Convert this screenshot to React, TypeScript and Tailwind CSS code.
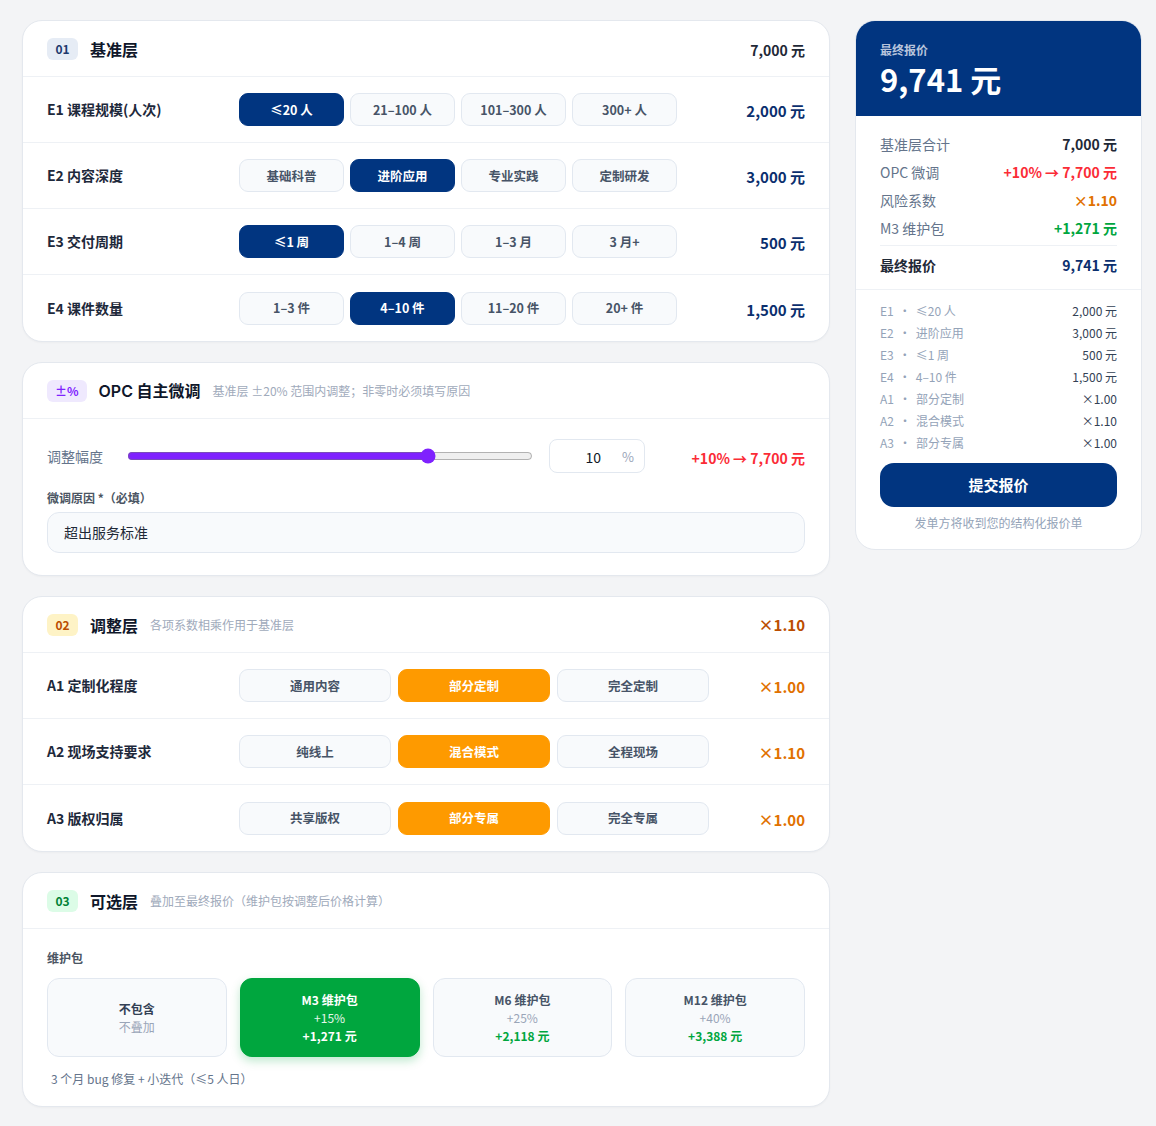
import React, { useState } from "react";

const font = "font-['Noto_Sans_CJK_SC','Noto_Sans',sans-serif]";

interface CardHeaderProps {
  badge: string;
  badgeClass: string;
  title: React.ReactNode;
  sub?: string;
  right?: React.ReactNode;
  titleClass?: string;
}

const CardHeader = ({ badge, badgeClass, title, sub, right, titleClass }: CardHeaderProps) => (
  <div className="flex h-[56px] items-center border-b border-[#eef1f5] px-6">
    <span className={`flex h-[22px] min-w-[31px] items-center justify-center rounded-md px-2 text-[12px] font-bold ${badgeClass}`}>
      {badge}
    </span>
    <span className={`ml-3 font-bold text-[#0f172a] ${titleClass ?? "text-[16px]"}`}>{title}</span>
    {sub && <span className="ml-3 text-[12px] text-[#a0aabb]">{sub}</span>}
    <div className="ml-auto">{right}</div>
  </div>
);

interface OptionRowProps {
  label: string;
  options: string[];
  selected: number;
  value: string;
  cols: "4" | "3";
  tone: "navy" | "amber";
  last?: boolean;
}

const OptionRow = ({ label, options, selected, value, cols, tone, last }: OptionRowProps) => {
  const activeCls =
    tone === "navy"
      ? "bg-[#013580] text-white border-[#013580] font-bold"
      : "bg-[#fe9a00] text-white border-[#fe9a00] font-bold";
  return (
    <div className={`flex h-[66px] items-center px-6 ${last ? "" : "border-b border-[#eef1f5]"}`}>
      <div className="w-[192px] text-[14px] font-bold text-[#1e293b]">{label}</div>
      <div className={cols === "4" ? "grid w-[438px] grid-cols-4 gap-1.5" : "grid w-[470px] grid-cols-3 gap-[7px]"}>
        {options.map((o, i) => (
          <div
            key={o}
            className={`flex h-[33px] items-center justify-center rounded-[9px] border pt-[1px] text-[12.5px] ${
              i === selected ? activeCls : "border-[#e2e8f0] bg-[#f8fafc] font-semibold text-[#475467]"
            }`}
          >
            {o}
          </div>
        ))}
      </div>
      <div
        className={`ml-auto pt-1 text-[15px] ${
          tone === "navy" ? "font-bold text-[#0b2f6e]" : "font-semibold text-[#e17100]"
        }`}
      >
        {value}
      </div>
    </div>
  );
};

const Card = ({ children }: { children: React.ReactNode }) => (
  <div className="overflow-hidden rounded-[20px] border border-[#e4e8ee] bg-white shadow-[0_1px_2px_rgba(15,23,42,0.03)]">
    {children}
  </div>
);

const maint = [
  { t: "不包含", p: "不叠加", a: "" },
  { t: "M3 维护包", p: "+15%", a: "+1,271 元" },
  { t: "M6 维护包", p: "+25%", a: "+2,118 元" },
  { t: "M12 维护包", p: "+40%", a: "+3,388 元" },
];

const breakdown = [
  ["E1", "≤20 人", "2,000 元"],
  ["E2", "进阶应用", "3,000 元"],
  ["E3", "≤1 周", "500 元"],
  ["E4", "4–10 件", "1,500 元"],
  ["A1", "部分定制", "×1.00"],
  ["A2", "混合模式", "×1.10"],
  ["A3", "部分专属", "×1.00"],
];

export default function App() {
  const [pct, setPct] = useState(10);
  return (
    <div className={`min-h-[1126px] bg-[#f3f4f6] pt-5 pl-[22px] ${font}`}>
      <div className="flex items-start gap-[25px]">
        <div className="flex w-[808px] flex-col gap-5">
          <Card>
            <CardHeader
              badge="01"
              badgeClass="bg-[#e6ecf5] text-[#1e3a6e]"
              title="基准层"
              right={<span className="text-[14px] font-semibold text-[#1f2937]">7,000 元</span>}
            />
            <OptionRow label="E1 课程规模(人次)" options={["≤20 人", "21–100 人", "101–300 人", "300+ 人"]} selected={0} value="2,000 元" cols="4" tone="navy" />
            <OptionRow label="E2 内容深度" options={["基础科普", "进阶应用", "专业实践", "定制研发"]} selected={1} value="3,000 元" cols="4" tone="navy" />
            <OptionRow label="E3 交付周期" options={["≤1 周", "1–4 周", "1–3 月", "3 月+"]} selected={0} value="500 元" cols="4" tone="navy" />
            <OptionRow label="E4 课件数量" options={["1–3 件", "4–10 件", "11–20 件", "20+ 件"]} selected={1} value="1,500 元" cols="4" tone="navy" last />
          </Card>

          <Card>
            <CardHeader
              badge="±%"
              badgeClass="bg-[#efe9fe] text-[#7f22fe]"
              title={
                <>
                  <span className="font-['Inter',sans-serif] font-semibold">OPC</span> 自主微调
                </>
              }
              titleClass="text-[16px]"
              sub="基准层 ±20% 范围内调整；非零时必须填写原因"
            />
            <div className="px-6 pt-5 pb-[22px]">
              <div className="flex items-center">
                <span className="w-[80px] text-[14px] text-[#64748b]">调整幅度</span>
                <input
                  type="range"
                  min={-20}
                  max={20}
                  value={pct}
                  onChange={(e) => setPct(Number(e.target.value))}
                  className="w-[406px] accent-[#7f22fe]"
                />
                <div className="relative ml-4 h-[34px] w-[96px] rounded-lg border border-[#e2e8f0] bg-white">
                  <span className="absolute top-[7px] right-[43px] text-[14px] text-[#111827]">{pct}</span>
                  <span className="absolute top-[7px] right-[10px] text-[13px] text-[#9aa5b8]">%</span>
                </div>
                <span className="ml-auto pt-1 text-[14px] font-semibold text-[#fb2c36]">+10% → 7,700 元</span>
              </div>
              <div className="mt-4 text-[12px] font-semibold text-[#4b5563]">微调原因 *（必填）</div>
              <div className="mt-[5px] flex h-[41px] items-center rounded-xl border border-[#e2e8f0] bg-[#f8fafc] px-4 text-[14px] text-[#1f2937]">
                超出服务标准
              </div>
            </div>
          </Card>

          <Card>
            <CardHeader
              badge="02"
              badgeClass="bg-[#fef3c6] text-[#bb4d00]"
              title="调整层"
              sub="各项系数相乘作用于基准层"
              right={<span className="text-[15px] font-semibold text-[#bb4d00]">×1.10</span>}
            />
            <OptionRow label="A1 定制化程度" options={["通用内容", "部分定制", "完全定制"]} selected={1} value="×1.00" cols="3" tone="amber" />
            <OptionRow label="A2 现场支持要求" options={["纯线上", "混合模式", "全程现场"]} selected={1} value="×1.10" cols="3" tone="amber" />
            <OptionRow label="A3 版权归属" options={["共享版权", "部分专属", "完全专属"]} selected={1} value="×1.00" cols="3" tone="amber" last />
          </Card>

          <Card>
            <CardHeader badge="03" badgeClass="bg-[#dcfce7] text-[#008236]" title="可选层" sub="叠加至最终报价（维护包按调整后价格计算）" />
            <div className="px-6 pt-[20px] pb-[18px]">
              <div className="text-[12px] font-semibold text-[#4b5563]">维护包</div>
              <div className="mt-[11px] grid grid-cols-4 gap-[13px]">
                {maint.map((m, i) => {
                  const on = i === 1;
                  return (
                    <div
                      key={m.t}
                      className={`flex h-[79px] flex-col items-center justify-center rounded-xl border text-[12px] leading-[18px] ${
                        on
                          ? "border-[#00a63e] bg-[#00a63e] text-white shadow-[0_4px_10px_rgba(0,166,62,0.25)]"
                          : "border-[#e2e8f0] bg-[#f8fafc]"
                      }`}
                    >
                      <span className={`font-bold ${on ? "text-white" : i === 0 ? "text-[#334155]" : "text-[#475467]"}`}>{m.t}</span>
                      <span className={on ? "text-white/90" : "text-[#9aa5b8]"}>{m.p}</span>
                      {m.a && <span className={`font-bold ${on ? "text-white" : "text-[#00a63e]"}`}>{m.a}</span>}
                    </div>
                  );
                })}
              </div>
              <div className="mt-[13px] pl-1 text-[12px] text-[#64748b]">3 个月 bug 修复 + 小迭代（≤5 人日）</div>
            </div>
          </Card>
        </div>

        <div className="w-[287px] overflow-hidden rounded-[20px] border border-[#e4e8ee] bg-white">
          <div className="bg-[#013580] px-6 pt-[20px] pb-[18px]">
            <div className="text-[12px] font-bold text-[#b7c4dc]">最终报价</div>
            <div className="mt-[1px] text-[31px] leading-[38px] font-bold text-white">9,741 元</div>
          </div>
          <div className="px-6 pt-[14px]">
            {[
              ["基准层合计", "7,000 元", "text-[#1f2937]"],
              ["OPC 微调", "+10% → 7,700 元", "text-[#fb2c36]"],
              ["风险系数", "×1.10", "text-[#e17100]"],
              ["M3 维护包", "+1,271 元", "text-[#00a63e]"],
            ].map(([l, v, c]) => (
              <div key={l} className="flex h-[28px] items-center justify-between text-[14px]">
                <span className="text-[#64748b]">{l}</span>
                <span className={`font-semibold ${c}`}>{v}</span>
              </div>
            ))}
            <div className="mt-[3px] flex h-[38px] items-center justify-between border-t border-[#eef1f5] pt-[1px] text-[14px] font-bold">
              <span className="text-[#1f2937]">最终报价</span>
              <span className="text-[#0b2f6e]">9,741 元</span>
            </div>
          </div>
          <div className="mt-[6px] border-t border-[#eef1f5] px-6 pt-[10px] pb-[17px]">
            {breakdown.map(([k, n, v]) => (
              <div key={k} className="flex h-[22px] items-center justify-between text-[12px]">
                <span className="text-[#94a3b8]">
                  {k}
                  <span className="mx-[5px]">·</span>
                  {n}
                </span>
                <span className="text-[#334155]">{v}</span>
              </div>
            ))}
            <button className="mt-[9px] flex h-[44px] w-full items-center justify-center rounded-[14px] bg-[#013580] text-[15px] font-bold text-white">
              提交报价
            </button>
            <div className="mt-[7px] text-center text-[12px] text-[#94a3b8]">发单方将收到您的结构化报价单</div>
          </div>
        </div>
      </div>
    </div>
  );
}
